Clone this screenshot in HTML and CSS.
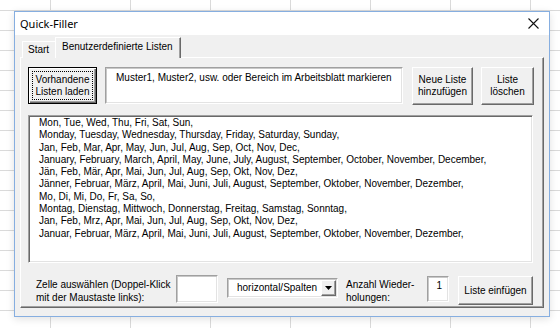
FILE: index.html
```html
<!DOCTYPE html>
<html lang="de">
<head>
<meta charset="utf-8">
<title>Quick-Filler</title>
<link rel="stylesheet" href="styles.css">
</head>
<body>
<div class="dialog">
  <div class="titlebar">
    <span class="title">Quick-Filler</span>
    <svg class="close" width="11" height="11" viewBox="0 0 11 11"><path d="M0.5 0.5 L10.5 10.5 M10.5 0.5 L0.5 10.5" stroke="#111" stroke-width="1.1" fill="none"/></svg>
  </div>
  <div class="client">
    <div class="tabs">
      <div class="tab">Start</div>
      <div class="tab active">Benutzerdefinierte Listen</div>
    </div>
    <div class="page">
      <div class="row top-row">
        <button class="btn default b-load">Vorhandene<br>Listen laden</button>
        <div class="field pattern">Muster1, Muster2, usw. oder Bereich im Arbeitsblatt markieren</div>
        <button class="btn b-new">Neue Liste<br>hinzufügen</button>
        <button class="btn b-del">Liste<br>löschen</button>
      </div>
      <div class="listbox">
        <div>Mon, Tue, Wed, Thu, Fri, Sat, Sun,</div>
        <div>Monday, Tuesday, Wednesday, Thursday, Friday, Saturday, Sunday,</div>
        <div>Jan, Feb, Mar, Apr, May, Jun, Jul, Aug, Sep, Oct, Nov, Dec,</div>
        <div>January, February, March, April, May, June, July, August, September, October, November, December,</div>
        <div>Jän, Feb, Mär, Apr, Mai, Jun, Jul, Aug, Sep, Okt, Nov, Dez,</div>
        <div>Jänner, Februar, März, April, Mai, Juni, Juli, August, September, Oktober, November, Dezember,</div>
        <div>Mo, Di, Mi, Do, Fr, Sa, So,</div>
        <div>Montag, Dienstag, Mittwoch, Donnerstag, Freitag, Samstag, Sonntag,</div>
        <div>Jan, Feb, Mrz, Apr, Mai, Jun, Jul, Aug, Sep, Okt, Nov, Dez,</div>
        <div>Januar, Februar, März, April, Mai, Juni, Juli, August, September, Oktober, November, Dezember,</div>
      </div>
      <div class="row bottom-row">
        <div class="label l-cell">Zelle auswählen (Doppel-Klick<br>mit der Maustaste links):</div>
        <div class="field cell"></div>
        <div class="combo">
          <span class="combo-text">horizontal/Spalten</span>
          <span class="combo-btn"><svg width="7" height="4" viewBox="0 0 7 4"><path d="M0 0 H7 L3.5 4 Z" fill="#000"/></svg></span>
        </div>
        <div class="label l-rep">Anzahl Wieder-<br>holungen:</div>
        <div class="field rep">1</div>
        <button class="btn b-insert">Liste einfügen</button>
      </div>
    </div>
  </div>
</div>
</body>
</html>
```

FILE: styles.css
```css
* { box-sizing: border-box; }

html, body {
  margin: 0;
  padding: 0;
}

body {
  width: 560px;
  height: 328px;
  overflow: hidden;
  background-color: #ffffff;
  background-image:
    linear-gradient(to right, #dadada 0, #dadada 1px, transparent 1px),
    linear-gradient(to bottom, #dadada 0, #dadada 1px, transparent 1px);
  background-size: 80px 100%, 100% 20px;
  background-position: 50px 0, 0 10px;
  font-family: "Liberation Sans", Arial, sans-serif;
  font-size: 10px;
  color: #000;
  padding-top: 11px;
  padding-left: 14px;
}

.dialog {
  width: 536px;
  height: 306px;
  border: 1px solid #86aee0;
  background: #f0f0f0;
  box-shadow: 0 2px 8px rgba(0, 0, 0, 0.12);
  display: flex;
  flex-direction: column;
}

.titlebar {
  height: 23px;
  background: #ffffff;
  display: flex;
  align-items: center;
  padding-left: 5px;
}

.title {
  font-family: "Noto Sans", "Liberation Sans", sans-serif;
  font-size: 11px;
  color: #000;
}

.close {
  margin-left: auto;
  margin-right: 10px;
  display: block;
}

.client {
  flex: 1;
  padding: 3px 0 0 5px;
}

.tabs {
  display: flex;
  align-items: flex-end;
  height: 20px;
  padding-left: 2px;
  margin-bottom: -1px;
  position: relative;
  z-index: 1;
}

.tab {
  height: 17px;
  width: 34px;
  padding-left: 5px;
  line-height: 15px;
  border-top: 1px solid #ffffff;
  border-left: 1px solid #ffffff;
  border-right: 1px solid #a0a0a0;
  background: #f0f0f0;
  white-space: nowrap;
}

.tab.active {
  height: 21px;
  width: 126px;
  padding-left: 6px;
  line-height: 17px;
  border-right: 1px solid #696969;
  box-shadow: inset -1px 0 0 #a0a0a0;
  margin-left: -1px;
}

.page {
  width: 524px;
  height: 251px;
  border-top: 1px solid #ffffff;
  border-left: 1px solid #ffffff;
  border-right: 1px solid #696969;
  border-bottom: 1px solid #696969;
  box-shadow: inset -1px -1px 0 #a0a0a0;
  padding: 9px 0 0 7px;
}

.row {
  display: flex;
  align-items: flex-start;
}

.btn {
  font-family: "Liberation Sans", Arial, sans-serif;
  font-size: 10px;
  line-height: 12px;
  color: #000;
  background: #f0f0f0;
  padding: 0;
  margin: 0;
  border-top: 1px solid #ffffff;
  border-left: 1px solid #ffffff;
  border-right: 1px solid #696969;
  border-bottom: 1px solid #696969;
  box-shadow: inset -1px -1px 0 #a0a0a0;
  text-align: center;
  display: flex;
  align-items: center;
  justify-content: center;
}

.btn.default {
  border: 1px solid #000;
  box-shadow: inset 1px 1px 0 #ffffff, inset -1px -1px 0 #696969, inset -2px -2px 0 #a0a0a0;
  outline: 1px dotted #000;
  outline-offset: -5px;
}

.field {
  background: #ffffff;
  border-top: 1px solid #a0a0a0;
  border-left: 1px solid #a0a0a0;
  border-right: 1px solid #ffffff;
  border-bottom: 1px solid #ffffff;
  box-shadow: inset 1px 1px 0 #c8c8c8, inset -1px -1px 0 #e3e3e3;
  line-height: 12px;
  white-space: nowrap;
}

.b-load { width: 69px; height: 37px; }

.pattern {
  width: 298px;
  height: 37px;
  margin-left: 8px;
  padding: 4px 0 0 10px;
}

.b-new { width: 61px; height: 38px; margin-left: 9px; }
.b-del { width: 53px; height: 38px; margin-left: 8px; }

.listbox {
  width: 505px;
  height: 148px;
  margin-top: 10px;
  background: #ffffff;
  border-top: 1px solid #a0a0a0;
  border-left: 1px solid #a0a0a0;
  border-right: 1px solid #ffffff;
  border-bottom: 1px solid #ffffff;
  box-shadow: inset 1px 1px 0 #696969, inset -1px -1px 0 #e3e3e3;
  padding: 1px 0 0 10px;
  line-height: 12.3px;
  white-space: nowrap;
}

.bottom-row { margin-top: 12px; }

.label {
  line-height: 13px;
  white-space: nowrap;
}

.l-cell {
  width: 140px;
  margin-left: 8px;
  margin-top: 3px;
}

.cell { width: 42px; height: 28px; }

.combo {
  width: 111px;
  height: 20px;
  margin-left: 9px;
  margin-top: 3px;
  background: #ffffff;
  border-top: 1px solid #a0a0a0;
  border-left: 1px solid #a0a0a0;
  border-right: 1px solid #ffffff;
  border-bottom: 1px solid #ffffff;
  box-shadow: inset 1px 1px 0 #c8c8c8, inset -1px -1px 0 #e3e3e3;
  display: flex;
  align-items: stretch;
  padding: 1px;
}

.combo-text {
  flex: 1;
  padding-left: 8px;
  line-height: 16px;
  white-space: nowrap;
}

.combo-btn {
  width: 15px;
  background: #f0f0f0;
  border-top: 1px solid #ffffff;
  border-left: 1px solid #ffffff;
  border-right: 1px solid #696969;
  border-bottom: 1px solid #696969;
  box-shadow: inset -1px -1px 0 #a0a0a0;
  display: flex;
  align-items: center;
  justify-content: center;
}

.combo-btn svg { display: block; }

.l-rep {
  width: 81px;
  margin-left: 8px;
  margin-top: 3px;
}

.rep {
  width: 22px;
  height: 26px;
  margin-top: 1px;
  text-align: right;
  padding: 3px 6px 0 0;
}

.b-insert {
  width: 75px;
  height: 29px;
  margin-left: 9px;
  margin-top: 1px;
}
```
